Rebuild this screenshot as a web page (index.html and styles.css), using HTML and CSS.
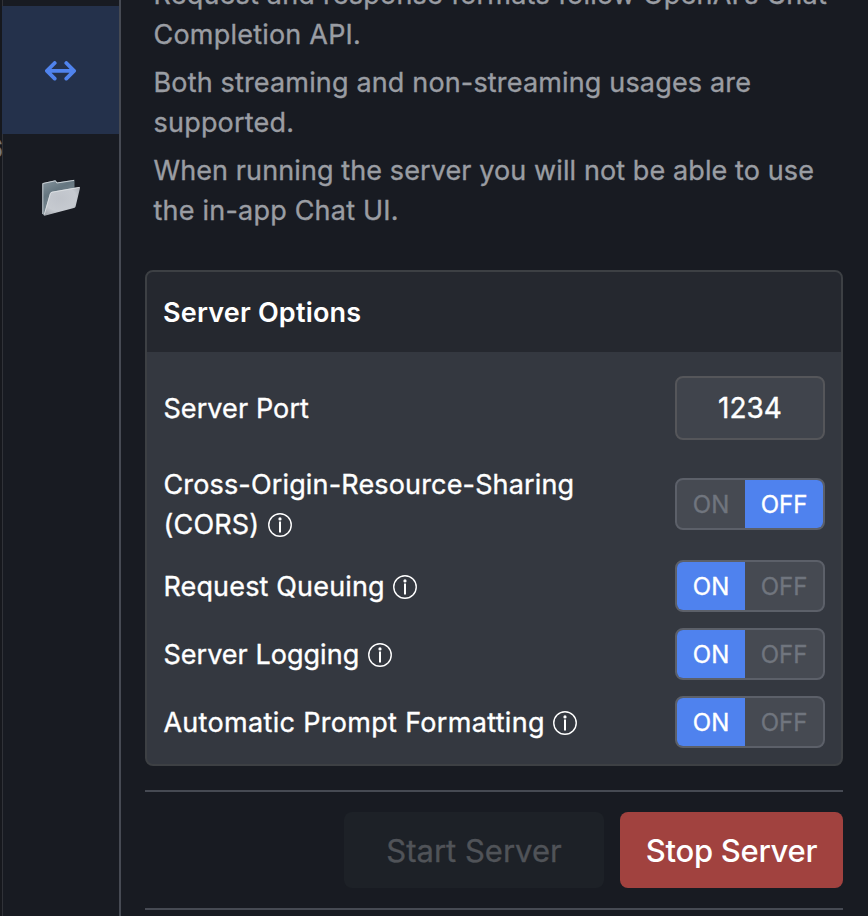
FILE: index.html
```html
<!DOCTYPE html>
<html lang="en">
<head>
<meta charset="utf-8">
<title>Local Server</title>
<link rel="stylesheet" href="styles.css">
</head>
<body>
<svg class="defs" width="0" height="0" aria-hidden="true">
  <symbol id="info" viewBox="0 0 24 24">
    <circle cx="12" cy="12" r="11.25" fill="none" stroke="currentColor" stroke-width="1.4"/>
    <circle cx="12" cy="5.9" r="1.6" fill="currentColor"/>
    <path d="M12 8.6v10.9" stroke="currentColor" stroke-width="2"/>
  </symbol>
</svg>
<div class="app">
  <div class="edge"><span class="edge-text">6</span></div>
  <nav class="sidebar">
    <a class="tab active">
      <svg width="32" height="20" viewBox="0 0 32 20" fill="none" stroke="currentColor" stroke-width="3.8" stroke-linecap="round" stroke-linejoin="round">
        <path d="M2 9.8h27M9.7 2 1.9 9.8l7.8 7.8M21.3 2l7.8 7.8-7.8 7.8"/>
      </svg>
    </a>
    <a class="tab">
      <svg class="folder" width="40" height="38" viewBox="0 0 40 38">
        <defs>
          <linearGradient id="back" x1="0" y1="0" x2="0.5" y2="1">
            <stop offset="0" stop-color="#8997a0"/><stop offset="0.4" stop-color="#657680"/><stop offset="1" stop-color="#84919a"/>
          </linearGradient>
          <radialGradient id="front" cx="0.45" cy="0.4" r="0.8">
            <stop offset="0" stop-color="#bfc3ca"/><stop offset="0.55" stop-color="#c6cad0"/><stop offset="1" stop-color="#949aa1"/>
          </radialGradient>
        </defs>
        <path d="M1.5 4.2 14.5 1.3 16 3.5 33.5.8v27L3 36.5 1.5 35z" fill="url(#back)"/>
        <path d="M1.8 35V4.5l12.6-2.7 1.5 2.2L33 1.4" fill="none" stroke="#c8cfd4" stroke-width="1"/>
        <path d="M9 14.5q.4-1.4 2-1.8L38 8q1.2-.2 1 1l-4.4 18.5q-.3 1.2-1.7 1.6L4.4 36.6q-1.7.4-1.4-1.1z" fill="url(#front)"/>
        <path d="M3.3 35.5 9.4 14.5q.3-1 1.6-1.3L38.5 8.4" fill="none" stroke="#e2e6e9" stroke-width=".8"/>
      </svg>
    </a>
  </nav>
  <main class="content">
    <section class="intro">
      <p><span class="wide">Request and response formats follow OpenAI’s Chat</span><br><span class="wide">Completion API.</span></p>
      <p><span class="normal">Both streaming and non-streaming usages are</span><br><span class="wide">supported.</span></p>
      <p><span class="snug">When running the server you will not be able to use</span><br><span class="wide">the in-app Chat UI.</span></p>
    </section>
    <section class="card">
      <h2>Server Options</h2>
      <div class="rows">
        <div class="row port"><div class="label"><span class="snug">Server Port</span></div><div class="input">1234</div></div>
        <div class="row tall"><div class="label"><span class="normal">Cross-Origin-Resource-Sharing</span><br><span class="wide">(CORS)</span><svg class="info"><use href="#info"/></svg></div>
          <div class="toggle"><span class="on">ON</span><span class="off selected">OFF</span></div></div>
        <div class="row"><div class="label"><span class="normal">Request Queuing</span><svg class="info"><use href="#info"/></svg></div>
          <div class="toggle"><span class="on selected">ON</span><span class="off">OFF</span></div></div>
        <div class="row"><div class="label"><span class="tight">Server Logging</span><svg class="info"><use href="#info"/></svg></div>
          <div class="toggle"><span class="on selected">ON</span><span class="off">OFF</span></div></div>
        <div class="row"><div class="label"><span class="wider">Automatic Prompt Formatting</span><svg class="info"><use href="#info"/></svg></div>
          <div class="toggle"><span class="on selected">ON</span><span class="off">OFF</span></div></div>
      </div>
    </section>
    <div class="actions">
      <button class="start" disabled>Start Server</button>
      <button class="stop">Stop Server</button>
    </div>
  </main>
</div>
</body>
</html>
```
FILE: styles.css
```css
* { box-sizing: border-box; }
body {
  margin: 0;
  background: #181b22;
  color: #fff;
  font: 400 27px/40px Inter, "Liberation Sans", sans-serif;
  -webkit-text-stroke: 0.35px currentColor;
}
.defs { position: absolute; }
.app { display: flex; width: 868px; height: 916px; overflow: hidden; }
.edge {
  display: flex;
  justify-content: flex-end;
  flex: none;
  width: 3px;
  padding-top: 129px;
  overflow: hidden;
  border-right: 1px solid #303238;
  background: #16181d;
  color: #77787a;
}
.edge-text { font-size: 25px; letter-spacing: -1px; }
.sidebar {
  flex: none;
  width: 118px;
  padding-top: 6px;
  border-right: 2px solid #464a53;
}
.tab { display: flex; align-items: center; justify-content: center; height: 128px; margin-left: -1px; color: #5083ed; }
.tab.active { background: #24314b; }
.tab.active svg { margin-top: 2px; }
.folder { margin-left: 1px; }
.content { flex: none; width: 722px; padding-left: 24px; }
.intro { margin-top: -25px; height: 295px; padding-left: 8.5px; color: #9a9da3; white-space: nowrap; }
.intro p { margin: 0 0 8px; }
.tight { letter-spacing: 0.03px; }
.snug { letter-spacing: 0.1px; }
.normal { letter-spacing: 0.16px; }
.wide { letter-spacing: 0.21px; }
.wider { letter-spacing: 0.32px; }
.card { height: 496px; overflow: hidden; border: 2px solid #3d4044; border-radius: 8px; background: #343840; }
h2 {
  margin: 0;
  height: 80px;
  padding: 1px 16px 0;
  background: #25282f;
  font-size: 27px;
  font-weight: 600;
  line-height: 80px;
  letter-spacing: 0.2px;
  -webkit-text-stroke: 0;
}
.rows { display: flex; flex-direction: column; gap: 16px; padding: 24px 16px; }
.row { display: flex; align-items: center; justify-content: space-between; height: 52px; }
.row.port { height: 64px; margin-bottom: 8px; }
.row.tall { height: 80px; }
.label { padding: 2px 0 0 0.4px; white-space: nowrap; }
.info { width: 24px; height: 24px; margin-left: 8.5px; vertical-align: -3px; }
.input {
  width: 150px;
  height: 64px;
  border: 2px solid #55565a;
  border-radius: 8px;
  background: #40444c;
  font-size: 28px;
  line-height: 61px;
  text-align: center;
}
.toggle {
  display: flex;
  width: 150px;
  height: 52px;
  overflow: hidden;
  border: 2px solid #5c6069;
  border-radius: 8px;
  background: #464a52;
  color: #70757e;
  font-size: 24px;
  line-height: 49px;
  text-align: center;
}
.on { width: 68px; }
.off { width: 78px; }
.selected { background: #4f82ee; color: #fff; }
.actions {
  display: flex;
  justify-content: flex-end;
  gap: 16px;
  height: 120px;
  margin-top: 24px;
  padding: 20px 0;
  border-top: 2px solid #464a53;
  border-bottom: 2px solid #464a53;
}
button {
  border: 0;
  border-radius: 8px;
  padding: 2px 0 0;
  font: 400 31px/74px Inter, "Liberation Sans", sans-serif;
  color: #fff;
  -webkit-text-stroke: 0.35px currentColor;
}
.start { width: 260px; background: #1d2127; color: #505358; }
.stop { width: 223px; background: #a1423f; font-weight: 500; letter-spacing: -0.3px; -webkit-text-stroke: 0; }
```
